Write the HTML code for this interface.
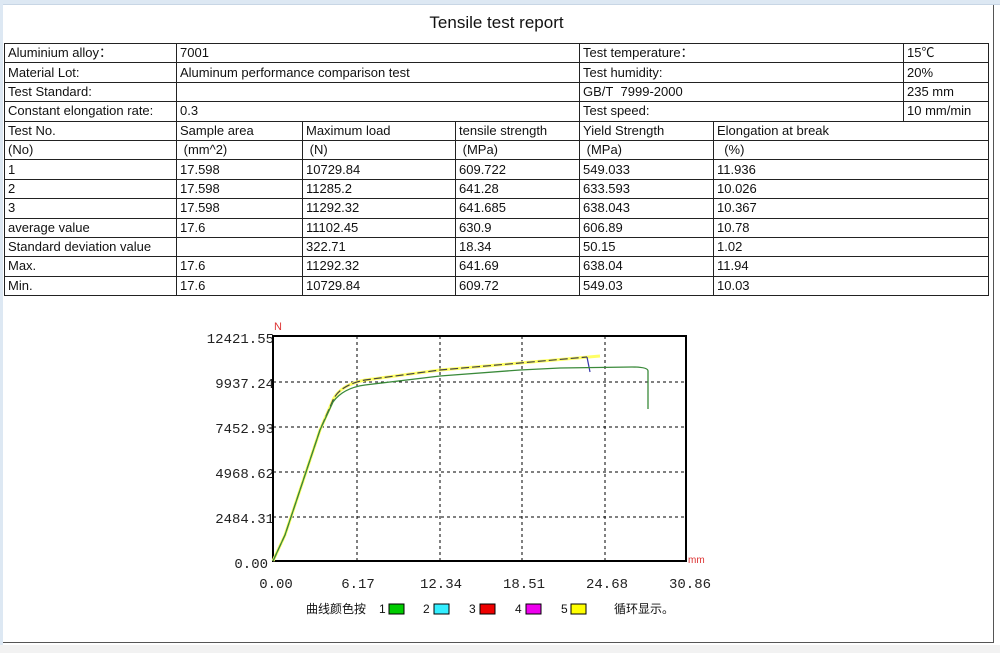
<!DOCTYPE html>
<html><head><meta charset="utf-8"><style>
body{margin:0;width:1000px;height:653px;background:#fff;position:relative;overflow:hidden;font-family:"Liberation Sans","Noto Sans CJK SC",sans-serif;}
.top{position:absolute;left:0;top:0;width:1000px;height:4px;background:#dde8f3;border-bottom:1px solid #c8d6e5}
.left{position:absolute;left:0;top:0;width:3px;height:653px;background:#dde8f3}
.frame{position:absolute;left:3px;top:5px;width:990px;height:637px;border-right:1px solid #555;border-bottom:1px solid #555}
.title{position:absolute;left:0;width:993px;top:13px;text-align:center;font-size:17px;color:#111}
table{position:absolute;left:4px;top:43px;border-collapse:collapse;font-size:13px;color:#111;table-layout:fixed}
td{border:1px solid #222;height:18.4px;padding:0 0 0 3px;white-space:nowrap;overflow:hidden;line-height:18px}
.bot{position:absolute;left:0;top:645px;width:1000px;height:8px;background:#f2f2f2}
</style></head><body>
<div class="top"></div><div class="left"></div>
<div class="frame"></div>
<div class="title">Tensile test report</div>
<table>
<colgroup><col style="width:172px"><col style="width:126px"><col style="width:153px"><col style="width:124px"><col style="width:134px"><col style="width:190px"><col style="width:85px"></colgroup>
<tr><td>Aluminium alloy：</td><td colspan="3">7001</td><td colspan="2">Test temperature：</td><td>15℃</td></tr>
<tr><td>Material Lot:</td><td colspan="3">Aluminum performance comparison test</td><td colspan="2">Test humidity:</td><td>20%</td></tr>
<tr><td>Test Standard:</td><td colspan="3"></td><td colspan="2">GB/T&nbsp; 7999-2000</td><td>235 mm</td></tr>
<tr><td>Constant elongation rate:</td><td colspan="3">0.3</td><td colspan="2">Test speed:</td><td>10 mm/min</td></tr>
<tr><td>Test No.</td><td>Sample area</td><td>Maximum load</td><td>tensile strength</td><td>Yield Strength</td><td colspan="2">Elongation at break</td></tr>
<tr><td>(No)</td><td>&nbsp;(mm^2)</td><td>&nbsp;(N)</td><td>&nbsp;(MPa)</td><td>&nbsp;(MPa)</td><td colspan="2">&nbsp;&nbsp;(%)</td></tr>
<tr><td>1</td><td>17.598</td><td>10729.84</td><td>609.722</td><td>549.033</td><td colspan="2">11.936</td></tr>
<tr><td>2</td><td>17.598</td><td>11285.2</td><td>641.28</td><td>633.593</td><td colspan="2">10.026</td></tr>
<tr><td>3</td><td>17.598</td><td>11292.32</td><td>641.685</td><td>638.043</td><td colspan="2">10.367</td></tr>
<tr><td>average value</td><td>17.6</td><td>11102.45</td><td>630.9</td><td>606.89</td><td colspan="2">10.78</td></tr>
<tr><td>Standard deviation value</td><td></td><td>322.71</td><td>18.34</td><td>50.15</td><td colspan="2">1.02</td></tr>
<tr><td>Max.</td><td>17.6</td><td>11292.32</td><td>641.69</td><td>638.04</td><td colspan="2">11.94</td></tr>
<tr><td>Min.</td><td>17.6</td><td>10729.84</td><td>609.72</td><td>549.03</td><td colspan="2">10.03</td></tr>
</table>
<svg style="position:absolute;left:0;top:0" width="1000" height="653">
<g font-family="Liberation Mono,monospace" font-size="14" fill="#222" text-anchor="end">
<text x="274" y="343">12421.55</text><text x="274" y="388">9937.24</text><text x="274" y="433">7452.93</text><text x="274" y="478">4968.62</text><text x="274" y="523">2484.31</text><text x="268" y="568">0.00</text>
</g>
<g font-family="Liberation Mono,monospace" font-size="14" fill="#222" text-anchor="middle">
<text x="276" y="588">0.00</text><text x="358" y="588">6.17</text><text x="441" y="588">12.34</text><text x="524" y="588">18.51</text><text x="607" y="588">24.68</text><text x="690" y="588">30.86</text>
</g>
<text x="274" y="330" font-size="11" fill="#d33">N</text>
<text x="688" y="563" font-size="10" fill="#d33">mm</text>
<rect x="273" y="336" width="413" height="225" fill="#fff" stroke="#000" stroke-width="2"/>
<g stroke="#000" stroke-dasharray="3,3" stroke-width="1">
<line x1="357" y1="336" x2="357" y2="561"/><line x1="440" y1="336" x2="440" y2="561"/><line x1="522" y1="336" x2="522" y2="561"/><line x1="605" y1="336" x2="605" y2="561"/>
<line x1="273" y1="382" x2="686" y2="382"/><line x1="273" y1="427" x2="686" y2="427"/><line x1="273" y1="472" x2="686" y2="472"/><line x1="273" y1="517" x2="686" y2="517"/>
</g>
<path d="M273 561 L285 535 L300 490 L320 430 L333 400 Q340 385 365 380 L440 370 L520 363 L600 356" fill="none" stroke="#ffff66" stroke-width="3"/>
<path d="M273 561 L285 535 L300 490 L320 430 L333 400 Q340 385 365 380 L440 370 L520 363 L587 357" fill="none" stroke="#444" stroke-width="1.2" stroke-dasharray="8,3"/>
<path d="M587 357 L590 372" stroke="#33a" stroke-width="1.2" fill="none"/>
<path d="M273 561 L285 535 L300 490 L320 430 L333 402 Q343 388 365 385 L440 376 L520 370 L560 368 L632 367 Q648 367 648 371 L648 409" fill="none" stroke="#3a8a3a" stroke-width="1.3"/>
<g font-size="12" fill="#111">
<text x="306" y="613">曲线颜色按</text><text x="379" y="613">1</text><text x="423" y="613">2</text><text x="469" y="613">3</text><text x="515" y="613">4</text><text x="561" y="613">5</text><text x="614" y="613">循环显示。</text>
</g>
<rect x="389" y="604" width="15" height="10" fill="#0c0" stroke="#000"/>
<rect x="434" y="604" width="15" height="10" fill="#3ef" stroke="#000"/>
<rect x="480" y="604" width="15" height="10" fill="#e00" stroke="#000"/>
<rect x="526" y="604" width="15" height="10" fill="#e0e" stroke="#000"/>
<rect x="571" y="604" width="15" height="10" fill="#ff0" stroke="#000"/>
</svg>
<div class="bot"></div>
</body></html>
